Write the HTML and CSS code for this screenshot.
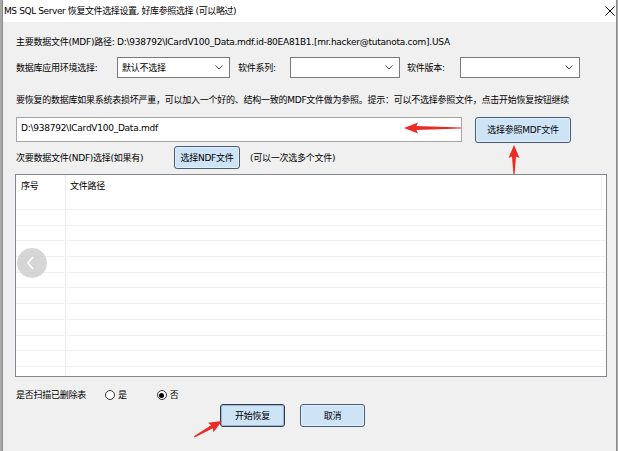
FILE: index.html
```html
<!DOCTYPE html>
<html lang="zh-CN">
<head>
<meta charset="utf-8">
<title>MS SQL Server 恢复文件选择设置</title>
<link rel="stylesheet" href="styles.css">
</head>
<body>
<div class="window">
  <div class="titlebar">
    <span class="title">MS SQL Server 恢复文件选择设置, 好库参照选择 (可以略过)</span>
    <svg class="close" width="10" height="10" viewBox="0 0 10 10"><path d="M0.5 0.5 L9.5 9.5 M9.5 0.5 L0.5 9.5" stroke="#000" stroke-width="1" fill="none"/></svg>
  </div>
  <div class="content">
    <div class="line l1">主要数据文件(MDF)路径: D:\938792\ICardV100_Data.mdf.id-80EA81B1.[mr.hacker@tutanota.com].USA</div>
    <div class="row selects">
      <span class="lbl lbl-env">数据库应用环境选择:</span>
      <div class="combo combo-env"><span>默认不选择</span><svg class="chev" width="8" height="5" viewBox="0 0 8 5"><path d="M0.5 0.5 L4 4 L7.5 0.5" stroke="#444" fill="none"/></svg></div>
      <span class="lbl lbl-series">软件系列:</span>
      <div class="combo combo-series"><span></span><svg class="chev" width="8" height="5" viewBox="0 0 8 5"><path d="M0.5 0.5 L4 4 L7.5 0.5" stroke="#444" fill="none"/></svg></div>
      <span class="lbl lbl-ver">软件版本:</span>
      <div class="combo combo-ver"><span></span><svg class="chev" width="8" height="5" viewBox="0 0 8 5"><path d="M0.5 0.5 L4 4 L7.5 0.5" stroke="#444" fill="none"/></svg></div>
    </div>
    <div class="line l3">要恢复的数据库如果系统表损坏严重，可以加入一个好的、结构一致的MDF文件做为参照。提示：可以不选择参照文件，点击开始恢复按钮继续</div>
    <div class="row mdf">
      <div class="input">D:\938792\ICardV100_Data.mdf</div>
      <button class="btn btn-mdf">选择参照MDF文件</button>
    </div>
    <div class="row ndf">
      <span class="ndf-lbl">次要数据文件(NDF)选择(如果有)</span>
      <button class="btn btn-ndf">选择NDF文件</button>
      <span class="ndf-hint">(可以一次选多个文件)</span>
    </div>
    <div class="table">
      <div class="trow thead"><div class="c1">序号</div><div class="c2">文件路径</div></div>
      <div class="trow"><div class="c1"></div><div class="c2"></div></div>
      <div class="trow"><div class="c1"></div><div class="c2"></div></div>
      <div class="trow"><div class="c1"></div><div class="c2"></div></div>
      <div class="trow"><div class="c1"></div><div class="c2"></div></div>
      <div class="trow"><div class="c1"></div><div class="c2"></div></div>
      <div class="trow"><div class="c1"></div><div class="c2"></div></div>
      <div class="trow"><div class="c1"></div><div class="c2"></div></div>
      <div class="trow"><div class="c1"></div><div class="c2"></div></div>
      <div class="trow"><div class="c1"></div><div class="c2"></div></div>
      <div class="trow"><div class="c1"></div><div class="c2"></div></div>
      <div class="trow"><div class="c1"></div><div class="c2"></div></div>
    </div>
    <div class="row radios">
      <span class="radio-lbl">是否扫描已删除表</span>
      <span class="radio"><span class="dot"></span>是</span>
      <span class="radio checked"><span class="dot"></span>否</span>
    </div>
    <div class="row actions">
      <button class="btn btn-act btn-start">开始恢复</button>
      <button class="btn btn-act">取消</button>
    </div>
  </div>
  <div class="navcircle"><svg width="10" height="14" viewBox="0 0 10 14"><path d="M7 1 L2 7 L7 13" stroke="#fff" stroke-width="1.6" fill="none"/></svg></div>
  <svg class="arrows" width="618" height="451" viewBox="0 0 618 451">
    <g fill="#ec2a24">
      <polygon points="404,128 418,122.5 416.5,126 461,127.4 461,128.6 416.5,130 418,133.5"/>
      <polygon points="514,145 519.5,158 516,156.5 514.6,174 513.4,174 512,156.5 508.5,158"/>
      <g transform="translate(222 421) rotate(150.3)">
        <polygon points="0,0 13,-5.5 11.5,-1.8 32,-0.6 32,0.6 11.5,1.8 13,5.5"/>
      </g>
    </g>
  </svg>
</div>
</body>
</html>
```
FILE: styles.css
```css
* { box-sizing: border-box; }
html, body { margin: 0; padding: 0; }
body {
  width: 618px;
  height: 451px;
  overflow: hidden;
  background: #a9a9a9;
  font-family: "DejaVu Sans", "Noto Sans CJK SC", "Microsoft YaHei", sans-serif;
  font-size: 9px;
  letter-spacing: -0.25px;
  color: #000;
}
.window {
  position: relative;
  margin-left: 2px;
  width: 615px;
  height: 451px;
  border-left: 1px solid #8c8c8c;
  border-right: 1px solid #8c8c8c;
  background: #f0f0f0;
  overflow: hidden;
}
.titlebar {
  height: 22px;
  background: #fff;
  display: flex;
  align-items: center;
  justify-content: space-between;
  padding: 0 1px 0 1px;
}
.title { line-height: 14px; letter-spacing: -0.4px; }
.close { display: block; }

.content { padding-left: 13px; }
.line { line-height: 14px; white-space: nowrap; }
.l1 { margin-top: 13px; }
.row { display: flex; align-items: center; }

.selects { margin-top: 8px; height: 21px; }
.lbl { white-space: nowrap; }
.lbl-env { width: 101px; }
.lbl-series { width: 60px; padding-left: 8px; }
.lbl-ver { width: 60px; padding-left: 7px; }
.combo {
  height: 21px;
  background: #fff;
  border: 1px solid #7a7a7a;
  display: flex;
  align-items: center;
  justify-content: space-between;
  padding: 0 6px 0 4px;
}
.combo span { line-height: 14px; }
.combo-env { width: 113px; }
.combo-series { width: 110px; }
.combo-ver { width: 120px; }
.chev { display: block; }

.l3 { margin-top: 15px; }

.mdf { margin-top: 10px; align-items: flex-start; }
.input {
  width: 446px;
  height: 25px;
  background: #fff;
  border: 1px solid #a5a5a5;
  padding: 3px 4px;
  line-height: 14px;
}
.btn {
  font-family: inherit;
  font-size: 9px;
  letter-spacing: -0.25px;
  color: #000;
  background: #cde3f6;
  border: 1px solid #4a5a70;
  border-radius: 3px;
  box-shadow: inset 0 0 0 1px #e2eefa;
  padding: 0;
  margin: 0;
  line-height: 14px;
}
.btn-mdf { width: 96px; height: 26px; margin-left: 13px; }

.ndf { margin-top: 3px; height: 23px; }
.ndf-lbl { width: 158px; white-space: nowrap; }
.btn-ndf { width: 66px; height: 23px; }
.ndf-hint { margin-left: 10px; }

.table {
  margin-top: 5px;
  margin-left: -1px;
  width: 592px;
  height: 203px;
  background: #fff;
  border: 1px solid #828790;
  overflow: hidden;
}
.trow {
  display: flex;
  height: 15.7px;
  border-top: 1px solid #f0f0f0;
}
.trow.thead { height: 34px; border-top: none; }
.c1 { width: 50px; border-right: 1px solid #ececec; }
.c2 { flex: 1; }
.thead .c1 { padding: 4px 0 0 5px; line-height: 14px; }
.thead .c2 { padding: 4px 0 0 4px; line-height: 14px; border-right: 1px solid #e8e8e8; margin-right: 4px; }

.radios { margin-top: 11px; height: 14px; line-height: 14px; }
.radio-lbl { width: 89px; }
.radio { display: flex; align-items: center; }
.radio + .radio { margin-left: 30px; }
.dot {
  width: 10px;
  height: 10px;
  border: 1px solid #333;
  border-radius: 50%;
  background: #fff;
  margin-right: 3px;
  display: flex;
  align-items: center;
  justify-content: center;
}
.checked .dot::after {
  content: "";
  width: 5px;
  height: 5px;
  border-radius: 50%;
  background: #000;
}

.actions { margin-top: 2px; padding-left: 204px; gap: 15px; }
.btn-act { width: 65px; height: 23px; }
.btn-start { border-color: #2f3d52; box-shadow: inset 0 0 0 1px #9fb3c9; }

.navcircle {
  position: absolute;
  left: 14px;
  top: 248px;
  width: 30px;
  height: 30px;
  border-radius: 50%;
  background: rgba(200, 200, 200, 0.75);
  display: flex;
  align-items: center;
  justify-content: center;
}
.navcircle svg { display: block; margin-left: -2px; }
.arrows {
  position: absolute;
  left: -3px;
  top: 0;
  pointer-events: none;
}
```
